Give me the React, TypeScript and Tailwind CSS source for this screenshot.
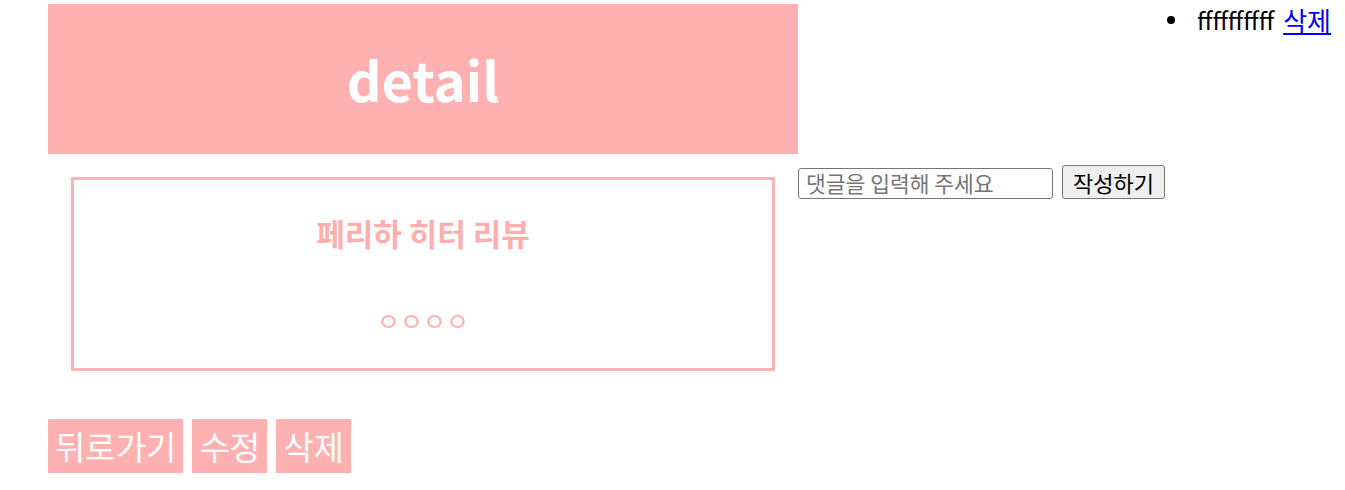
import React from "react";

export default function App() {
  const font = { fontFamily: '"Noto Sans CJK KR", "Noto Sans", sans-serif' };
  return (
    <div className="flex bg-white min-h-[490px]" style={font}>
      <div className="ml-[48px] mt-[4px] w-[750px] shrink-0">
        <div className="h-[150px] bg-[#ffb1b1] flex items-center justify-center">
          <h1 className="text-white font-bold text-[54px] leading-none">detail</h1>
        </div>
        <div className="mx-[23px] mt-[23px] h-[194px] border-[3px] border-[#f7b3b3] flex flex-col items-center">
          <div className="mt-[34px] text-[#ffaeae] font-bold text-[31px] leading-[38px]">페리하 히터 리뷰</div>
          <div className="mt-[54px] text-[#ffaeae] text-[25px] leading-[28px]">ㅇㅇㅇㅇ</div>
        </div>
        <div className="mt-[48px] flex gap-[9px]">
          <button className="h-[54px] px-[7px] bg-[#ffb1b1] text-white text-[33px] leading-none">뒤로가기</button>
          <button className="h-[54px] px-[7px] bg-[#ffb1b1] text-white text-[33px] leading-none">수정</button>
          <button className="h-[54px] px-[7px] bg-[#ffb1b1] text-white text-[33px] leading-none">삭제</button>
        </div>
      </div>
      <div className="flex-1 flex flex-col">
        <ul className="flex justify-end pr-[14px] pt-[4px] h-[36px]">
          <li className="flex items-center text-[24px] leading-[32px] text-black">
            <span className="w-[8px] h-[8px] rounded-full bg-black mr-[22px]"></span>
            <span>ffffffffff</span>
            <a href="#" className="ml-[9px] text-[#0000ee] underline text-[26px]">삭제</a>
          </li>
        </ul>
        <div className="mt-[129px] flex items-end gap-[9px]">
          <input
            className="w-[255px] h-[31px] border border-[#767676] rounded-[3px] px-[7px] text-[21.5px] placeholder:text-[#757575] outline-none"
            placeholder="댓글을 입력해 주세요"
          />
          <button className="w-[103px] h-[34px] border border-[#767676] rounded-[3px] bg-[#efefef] text-[22px] text-black leading-none">작성하기</button>
        </div>
      </div>
    </div>
  );
}
